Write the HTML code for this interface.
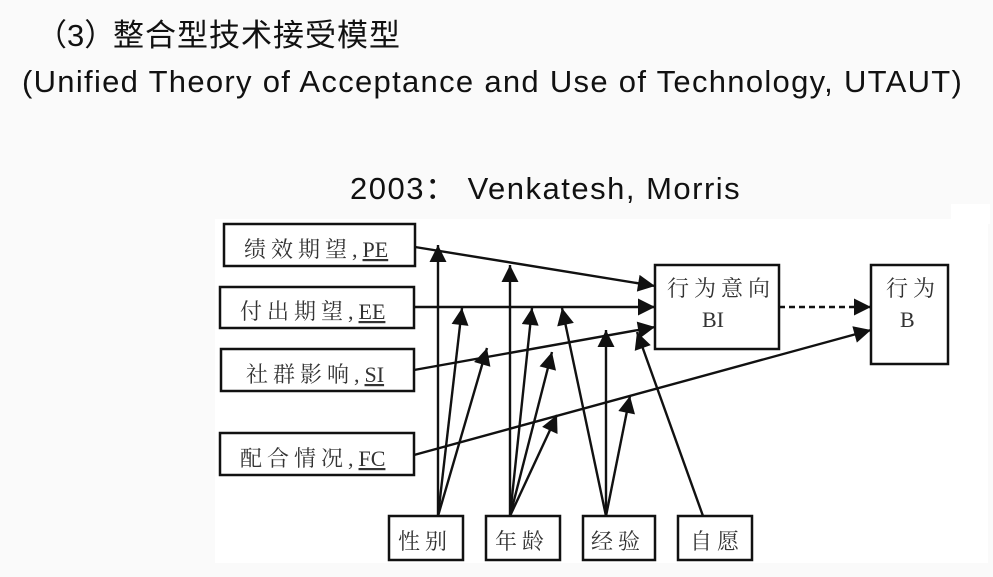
<!DOCTYPE html>
<html><head><meta charset="utf-8"><style>
html,body{margin:0;padding:0;}
body{width:993px;height:577px;background:#fafafa;position:relative;overflow:hidden;font-family:"Liberation Sans","Noto Sans CJK SC",sans-serif;color:#111;}
.t{position:absolute;white-space:nowrap;}
</style></head><body>
<div class="t" style="left:36px;top:10px;font-size:31px;">（3）</div>
<div class="t" style="left:113px;top:10px;font-size:31px;letter-spacing:1px;">整合型技术接受模型</div>
<div class="t" style="left:22px;top:64px;font-size:31px;letter-spacing:1.3px;">(Unified Theory of Acceptance and Use of Technology, UTAUT)</div>
<div class="t" style="left:350px;top:163px;font-size:31px;letter-spacing:1.5px;">2003： Venkatesh, Morris</div>
<svg width="993" height="577" style="position:absolute;left:0;top:0" xmlns="http://www.w3.org/2000/svg">
<defs><marker id="a" viewBox="0 0 10 10" refX="10" refY="5" markerWidth="22" markerHeight="17" markerUnits="userSpaceOnUse" orient="auto"><path d="M0 0L10 5L0 10z" fill="#111"/></marker></defs>
<rect x="215" y="219" width="773" height="344" fill="#fff"/>
<rect x="951" y="204" width="39" height="20" fill="#fff"/>
<g fill="#fff" stroke="#111" stroke-width="2.5">
<rect x="224" y="224" width="191" height="42"/>
<rect x="220" y="287" width="194" height="41"/>
<rect x="221" y="349" width="193" height="42"/>
<rect x="220" y="433" width="194" height="42"/>
<rect x="389" y="516" width="74" height="44"/>
<rect x="486" y="516" width="74" height="44"/>
<rect x="583" y="516" width="72" height="44"/>
<rect x="678" y="516" width="74" height="44"/>
<rect x="655" y="265" width="124" height="84"/>
<rect x="871" y="265" width="77" height="99"/>
</g>
<g stroke="#111" stroke-width="2.4" fill="none" marker-end="url(#a)">
<line x1="415" y1="247" x2="655" y2="286"/>
<line x1="414" y1="307" x2="655" y2="307"/>
<line x1="414" y1="370" x2="655" y2="327"/>
<line x1="414" y1="455" x2="871" y2="330"/>
<line x1="779" y1="307" x2="871" y2="307" stroke-dasharray="6,4"/>
<line x1="438" y1="516" x2="438" y2="245"/>
<line x1="438" y1="516" x2="462" y2="308"/>
<line x1="438" y1="516" x2="487" y2="348"/>
<line x1="510" y1="516" x2="510" y2="265"/>
<line x1="510" y1="516" x2="532" y2="308"/>
<line x1="510" y1="516" x2="552" y2="352"/>
<line x1="510" y1="516" x2="557" y2="415"/>
<line x1="606" y1="516" x2="562" y2="308"/>
<line x1="606" y1="516" x2="606" y2="330"/>
<line x1="606" y1="516" x2="630" y2="396"/>
<line x1="703" y1="516" x2="637" y2="332"/>
</g>
<g font-family="'Liberation Serif','Noto Serif CJK SC',serif" font-size="22" fill="#333" letter-spacing="5">
<text x="244" y="257">绩效期望,<tspan text-decoration="underline" letter-spacing="0">PE</tspan></text>
<text x="240" y="319">付出期望,<tspan text-decoration="underline" letter-spacing="0">EE</tspan></text>
<text x="246" y="382">社群影响,<tspan text-decoration="underline" letter-spacing="0">SI</tspan></text>
<text x="240" y="466">配合情况,<tspan text-decoration="underline" letter-spacing="0">FC</tspan></text>
<text x="398" y="549">性别</text>
<text x="495" y="549">年龄</text>
<text x="591" y="549">经验</text>
<text x="690" y="549">自愿</text>
<text x="667" y="296">行为意向</text>
<text x="702" y="327" letter-spacing="0">BI</text>
<text x="886" y="296">行为</text>
<text x="900" y="327" letter-spacing="0">B</text>
</g>
</svg>
</body></html>
